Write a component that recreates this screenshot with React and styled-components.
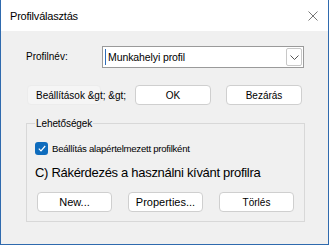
import React from "react";
import styled, { createGlobalStyle } from "styled-components";

const Global = createGlobalStyle`
  html, body {
    margin: 0;
    padding: 0;
    background: #f0f0f0;
  }
  body {
    font-family: "Liberation Sans", Arial, sans-serif;
    color: #000;
  }
`;

function App() {
  return (
    <>
      <Global />
      <Window>
        <TitleBar>
          <Title>Profilválasztás</Title>
          <CloseIcon viewBox="0 0 10 10">
            <path d="M0.5 0.5 L9.5 9.5 M9.5 0.5 L0.5 9.5" />
          </CloseIcon>
        </TitleBar>

        <Body>
          <NameRow>
            <Label>Profilnév:</Label>
            <Combo>
              <Caret />
              <ComboText>Munkahelyi profil</ComboText>
              <ComboButton>
                <svg width="9" height="5" viewBox="0 0 9 5">
                  <path d="M0.5 0.5 L4.5 4.5 L8.5 0.5" fill="none" stroke="#555" strokeWidth="1" />
                </svg>
              </ComboButton>
            </Combo>
          </NameRow>

          <ButtonRow>
            <Button $w={74} $flat>
              <ButtonText $overflow>Beállítások &amp;gt; &amp;gt;</ButtonText>
            </Button>
            <Button $w={76} $ml={34}>OK</Button>
            <Button $w={76} $ml={15}>Bezárás</Button>
          </ButtonRow>

          <Group>
            <Legend>Lehetőségek</Legend>
            <CheckRow>
              <Checkbox>
                <svg width="8" height="7" viewBox="0 0 8 7">
                  <path d="M0.8 3.6 L3 5.8 L7.2 1" fill="none" stroke="#fff" strokeWidth="1.2" />
                </svg>
              </Checkbox>
              <CheckLabel>Beállítás alapértelmezett profilként</CheckLabel>
            </CheckRow>
            <Prompt>C) Rákérdezés a használni kívánt profilra</Prompt>
            <GroupButtons>
              <Button $w={75} $roomy>New...</Button>
              <Button $w={75} $ml={16} $roomy>Properties...</Button>
              <Button $w={75} $ml={16}>Törlés</Button>
            </GroupButtons>
          </Group>
        </Body>
      </Window>
    </>
  );
}

const Window = styled.div`
  width: 329px;
  height: 245px;
  box-sizing: border-box;
  border: 1px solid #2f6aae;
  border-top: none;
  background: #f0f0f0;
  display: flex;
  flex-direction: column;
  overflow: hidden;
`;

const TitleBar = styled.div`
  height: 31px;
  margin: 0 -1px;
  background: #fff;
  display: flex;
  align-items: center;
  justify-content: space-between;
  padding: 0 11px 0 10px;
  flex-shrink: 0;
`;

const Title = styled.div`
  font-size: 11px;
  letter-spacing: -0.2px;
  padding-top: 1px;
`;

const CloseIcon = styled.svg`
  width: 10px;
  height: 10px;
  stroke: #777;
  stroke-width: 1;
  fill: none;
`;

const Body = styled.div`
  padding: 15px 0 0 24px;
  display: flex;
  flex-direction: column;
`;

const NameRow = styled.div`
  display: flex;
  align-items: center;
  height: 22px;
`;

const Label = styled.div`
  width: 76px;
  font-size: 10px;
  margin-top: -2px;
  padding-left: 1px;
`;

const Combo = styled.div`
  width: 202px;
  height: 22px;
  box-sizing: border-box;
  border: 1px solid #9a9a9a;
  background: #fff;
  display: flex;
  align-items: center;
  padding: 1px 1px 1px 2px;
`;

const Caret = styled.div`
  width: 1px;
  height: 16px;
  background: #2f6db8;
`;

const ComboText = styled.div`
  flex: 1;
  font-size: 10.5px;
  padding-left: 2px;
  letter-spacing: -0.1px;
`;

const ComboButton = styled.div`
  width: 16px;
  height: 18px;
  box-sizing: border-box;
  border: 1px solid #c8c8c8;
  border-radius: 2px;
  display: flex;
  align-items: center;
  justify-content: center;
`;

const ButtonRow = styled.div`
  display: flex;
  margin-top: 17px;
  padding-left: 2px;
`;

const Button = styled.div`
  width: ${(p) => p.$w}px;
  margin-left: ${(p) => p.$ml || 0}px;
  height: 20px;
  box-sizing: border-box;
  border: 1px solid ${(p) => (p.$flat ? "#ececec" : "#cfcfcf")};
  border-radius: 4px;
  background: ${(p) => (p.$flat ? "#f5f5f5" : "#fff")};
  display: flex;
  align-items: center;
  justify-content: center;
  font-size: ${(p) => (p.$roomy ? "11px" : "10px")};
  flex-shrink: 0;
  position: relative;
`;

const ButtonText = styled.span`
  white-space: nowrap;
  ${(p) => p.$overflow && "position: absolute; left: 8px;"}
`;

const Group = styled.fieldset`
  margin: 13px 0 0 1px;
  width: 279px;
  height: 104px;
  box-sizing: border-box;
  border: 1px solid #d8d8d8;
  padding: 0 0 0 8px;
  display: flex;
  flex-direction: column;
`;

const Legend = styled.legend`
  font-size: 10px;
  padding: 0 1px;
  margin-left: 0;
  letter-spacing: -0.1px;
`;

const CheckRow = styled.div`
  display: flex;
  align-items: center;
  margin-top: 13px;
`;

const Checkbox = styled.div`
  width: 13px;
  height: 13px;
  border-radius: 3px;
  background: #0f6cbd;
  display: flex;
  align-items: center;
  justify-content: center;
`;

const CheckLabel = styled.div`
  font-size: 9.6px;
  margin-left: 4px;
  letter-spacing: -0.25px;
`;

const Prompt = styled.div`
  font-size: 13px;
  margin-top: 10px;
  letter-spacing: -0.3px;
`;

const GroupButtons = styled.div`
  display: flex;
  margin-top: 12px;
  padding-left: 2px;
`;

export default App;
